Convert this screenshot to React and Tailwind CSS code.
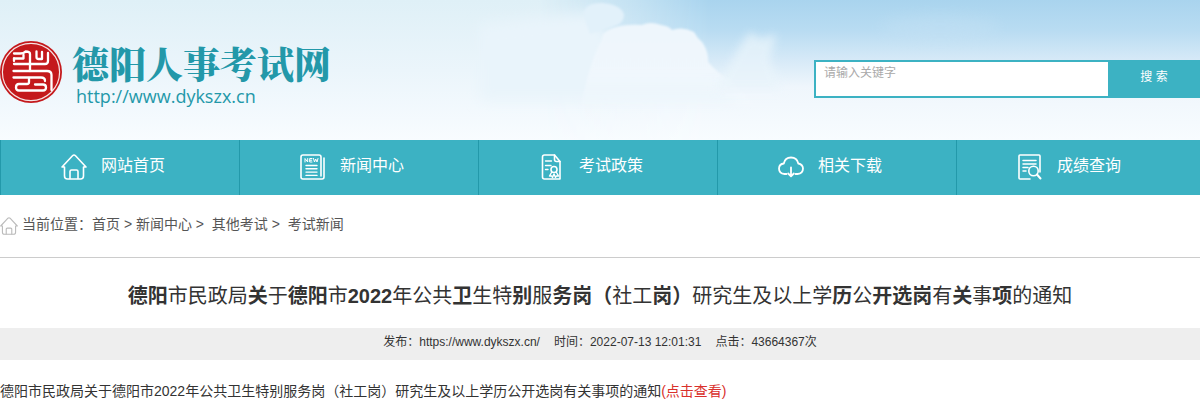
import { useState } from 'react'

function SealLogo() {
  return (
    <svg viewBox="0 0 64 64" className="h-16 w-16 shrink-0" fill="none" aria-hidden="true">
      <circle cx="31" cy="32" r="31" fill="#c4191c" />
      <circle cx="31" cy="32" r="28.6" stroke="#f6e3e3" strokeWidth="1.2" />
      <g stroke="#fff" strokeWidth="2.3" strokeLinejoin="round" strokeLinecap="round">
        <path d="M14 13.500H20Q24 13.500 25.500 11.500Q30 11.500 30 14V31" />
        <path d="M14 18.500H23.500V15M14 24H45Q48 24 48 21V13" />
        <path d="M36.500 11.500V17Q36.500 19 38.500 19H42V12" />
        <path d="M14 18.500V21M13.500 31H47Q51.500 31 51.500 35V50" />
        <path d="M13.500 37.500H41Q45 37.500 45 41" />
        <path d="M29 38V42Q29 44 27 44H19Q16 44 16 47.500Q16 50.500 19 50.500H43Q46 50.500 46 47.500Q46 44.500 43 44.500H35" />
      </g>
    </svg>
  )
}

function SkyBackground() {
  return (
    <svg
      viewBox="0 0 1200 140"
      preserveAspectRatio="none"
      className="absolute inset-0 h-full w-full"
      aria-hidden="true"
    >
      <defs>
        <linearGradient id="base" x1="0" y1="0" x2="0" y2="1">
          <stop offset="0" stopColor="#dff0f7" />
          <stop offset="0.5" stopColor="#ebf5fb" />
          <stop offset="1" stopColor="#f8fcff" />
        </linearGradient>
        <linearGradient id="sky" x1="0" y1="0" x2="0" y2="1">
          <stop offset="0" stopColor="#a9d4ee" />
          <stop offset="0.22" stopColor="#b9dcf2" />
          <stop offset="0.42" stopColor="#d5e9f7" />
          <stop offset="0.62" stopColor="#eff6fc" />
          <stop offset="1" stopColor="#f8fcff" />
        </linearGradient>
        <linearGradient id="fade" x1="0" y1="0" x2="1" y2="0">
          <stop offset="0.45" stopColor="#000" />
          <stop offset="0.53" stopColor="#888" />
          <stop offset="0.59" stopColor="#fff" />
        </linearGradient>
        <linearGradient id="cloud" x1="0" y1="0" x2="0" y2="1">
          <stop offset="0" stopColor="#eef6fc" />
          <stop offset="0.55" stopColor="#f0f7fd" />
          <stop offset="1" stopColor="#f5fafe" stopOpacity="0" />
        </linearGradient>
        <mask id="skyMask">
          <rect width="1200" height="140" fill="url(#fade)" />
        </mask>
        <filter id="soft">
          <feGaussianBlur stdDeviation="1" />
        </filter>
        <filter id="haze" x="-50%" y="-50%" width="200%" height="200%">
          <feGaussianBlur stdDeviation="7" />
        </filter>
        <filter id="wisp" x="-50%" y="-50%" width="200%" height="200%">
          <feGaussianBlur stdDeviation="4" />
        </filter>
      </defs>
      <rect width="1200" height="140" fill="url(#base)" />
      <rect width="1200" height="140" fill="url(#sky)" mask="url(#skyMask)" />
      <path d="M480 25L590 12L612 40L700 70L740 100H480Z" fill="#e9f4fb" filter="url(#haze)" />
      <path
        d="M583 14Q586 2 603 3Q622 5 624 15Q624 24 612 27L590 34Z"
        fill="#e2f1fa"
        filter="url(#soft)"
      />
      <path
        d="M602 40Q601 32 613 28Q625 24 642 25Q650 21 661 25Q669 26 672 30Q683 26 694 32Q697 38 702 42Q709 52 708 62Q716 72 730 80L760 110L580 110Q590 60 602 40Z"
        fill="url(#cloud)"
        filter="url(#soft)"
      />
      <path
        d="M740 46L750 32L760 39L776 34L770 60L782 90H715Z"
        fill="#e9f4fb"
        opacity="0.75"
        filter="url(#wisp)"
      />
      <ellipse cx="940" cy="28" rx="60" ry="12" fill="#c6e2f4" opacity="0.4" filter="url(#haze)" />
    </svg>
  )
}

function HomeIcon({ className, strokeWidth = 1.6 }) {
  return (
    <svg viewBox="0 0 26 26" className={className} fill="none" stroke="currentColor" strokeWidth={strokeWidth} strokeLinecap="round" strokeLinejoin="round" aria-hidden="true">
      <path d="M1 13L11.500 1.800Q13 0.300 14.500 1.800L25 13H22.500V22Q22.500 25 19.500 25H6.500Q3.500 25 3.500 22V13H1Z" />
      <path d="M9 24.500V17.500Q9 16 10.500 16H15.500Q17 16 17 17.500V24.500" />
    </svg>
  )
}

function NewsIcon({ className }) {
  return (
    <svg viewBox="0 0 26 26" className={className} fill="none" stroke="currentColor" strokeWidth="1.6" strokeLinecap="round" strokeLinejoin="round" aria-hidden="true">
      <path d="M21 22V3Q21 1 19 1H3Q1 1 1 3V23Q1 25 3 25H22Q24 25 24 23V4" />
      <path d="M6 11.500H17M6 14.800H17M6 18.100H17M6 21.400H17" strokeWidth="1.4" />
      <path d="M5 8V4.500L7.700 8V4.500M12 4.500H9.700V8H12M9.700 6.200H11.700M13.500 4.500L14.500 8L15.700 5L17 8L18 4.500" strokeWidth="1" />
    </svg>
  )
}

function PolicyIcon({ className }) {
  return (
    <svg viewBox="0 0 26 26" className={className} fill="none" stroke="currentColor" strokeWidth="1.6" strokeLinecap="round" strokeLinejoin="round" aria-hidden="true">
      <path d="M21 25H5.500Q3.500 25 3.500 23V3Q3.500 1 5.500 1H15.500L21 7.500V25" />
      <path d="M15.500 1V5.500Q15.500 7.500 17.500 7.500H21" />
      <path d="M6.500 7H12.500M6.500 11.500H12M6.500 15.500H9" strokeWidth="1.4" />
      <circle cx="15" cy="15.500" r="3" />
      <path d="M12.500 18.500L10.500 22H12.800L13.500 23.500L15 20L16.500 23.500L17.300 22H19.500L17.500 18.500" strokeWidth="1.400" />
    </svg>
  )
}

function DownloadIcon({ className }) {
  return (
    <svg viewBox="0 0 26 26" className={className} fill="none" stroke="currentColor" strokeWidth="1.8" strokeLinecap="round" strokeLinejoin="round" aria-hidden="true">
      <path d="M8.500 20H6.500Q1 19.500 1 14.500Q1.200 10 5.800 9.500Q7 3.500 13 3.500Q19 3.500 20.300 9.500Q24.800 10.300 25 14.500Q25 19.500 19.500 20H17.500" />
      <path d="M13 13.500V22M10.200 19.500L13 22.300L15.800 19.500" />
    </svg>
  )
}

function ScoreIcon({ className }) {
  return (
    <svg viewBox="0 0 26 26" className={className} fill="none" stroke="currentColor" strokeWidth="1.6" strokeLinecap="round" strokeLinejoin="round" aria-hidden="true">
      <path d="M13 25H3Q2 25 2 24V2Q2 1 3 1H22Q23 1 23 2V18" />
      <path d="M6 6.500H19M6 10H19M6 13.500H11M6 17H9" strokeWidth="1.500" />
      <circle cx="16.500" cy="17" r="4.700" />
      <path d="M20 20.500L23.500 24.500" strokeWidth="2" />
    </svg>
  )
}

const navItems = [
  { label: '网站首页', Icon: HomeIcon },
  { label: '新闻中心', Icon: NewsIcon },
  { label: '考试政策', Icon: PolicyIcon },
  { label: '相关下载', Icon: DownloadIcon },
  { label: '成绩查询', Icon: ScoreIcon },
]

const titleParts = [
  { text: '德阳', bold: true },
  { text: '市民政局' },
  { text: '关', bold: true },
  { text: '于' },
  { text: '德阳', bold: true },
  { text: '市' },
  { text: '2022', bold: true },
  { text: '年公共' },
  { text: '卫', bold: true },
  { text: '生特' },
  { text: '别', bold: true },
  { text: '服' },
  { text: '务岗（', bold: true },
  { text: '社工' },
  { text: '岗）', bold: true },
  { text: '研究生及以上学' },
  { text: '历', bold: true },
  { text: '公' },
  { text: '开选岗', bold: true },
  { text: '有' },
  { text: '关', bold: true },
  { text: '事' },
  { text: '项', bold: true },
  { text: '的通知' },
]

export default function App() {
  const [keyword, setKeyword] = useState('')

  return (
    <div lang="zh-CN" className="bg-white font-['Liberation_Sans','Noto_Sans_CJK_SC',sans-serif] text-[#333]">
      <header className="relative">
        <SkyBackground />
        <div className="relative flex h-[140px] items-start justify-between">
          <a href="#" className="mt-10 flex items-start">
            <SealLogo />
            <span className="ml-2 flex flex-col text-[#2398a9]">
              <span className="font-['Noto_Serif_CJK_SC','Noto_Sans_CJK_SC',serif] text-[37px] leading-[46px] font-black">
                德阳人事考试网
              </span>
              <span className="ml-1 font-['Open_Sans',sans-serif] text-lg leading-5">http://www.dykszx.cn</span>
            </span>
          </a>
          <form className="mt-[60px] flex h-[38px]" onSubmit={(e) => e.preventDefault()}>
            <input
              type="text"
              aria-label="请输入关键字"
              placeholder="请输入关键字"
              className="w-[294px] border-2 border-r-0 border-[#3cb2c3] bg-white px-2 pb-3 text-xs outline-none placeholder:text-[#a9a9a9]"
              value={keyword}
              onChange={(e) => setKeyword(e.target.value)}
            />
            <button type="submit" className="w-[92px] bg-[#3cb2c3] pb-1 text-xs text-white">
              搜 索
            </button>
          </form>
        </div>
      </header>

      <nav className="bg-[#3cb2c3]">
        <ul className="grid grid-cols-5 pr-[5px]">
          {navItems.map(({ label, Icon }) => (
            <li key={label} className="border-l border-[#2399aa]">
              <a href="#" className="flex h-[55px] items-start pl-[60px] text-base text-white">
                <Icon className="mt-[14px] h-[26px] w-[26px]" />
                <span className="ml-[14px] leading-[52px]">{label}</span>
              </a>
            </li>
          ))}
        </ul>
      </nav>

      <div className="flex h-[63px] items-start border-b border-[#ccc] text-sm leading-[58px] text-[#555]">
        <HomeIcon className="mt-[22px] mr-1 h-[18px] w-[18px] text-[#bbb]" />
        <p className="whitespace-pre">
          当前位置：<a href="#">首页</a> &gt; <a href="#">新闻中心</a> &gt;{'  '}
          <a href="#">其他考试</a> &gt;{'  '}
          <a href="#">考试新闻</a>
        </p>
      </div>

      <main>
        <h1 className="pt-[18px] pb-[12px] text-center text-xl leading-10">
          {titleParts.map((part, i) => (
            <span key={i} className={part.bold ? 'font-bold' : 'font-normal'}>
              {part.text}
            </span>
          ))}
        </h1>
        <p className="flex justify-center gap-[14px] bg-[#eee] pb-1 text-xs leading-7">
          <span>发布：https://www.dykszx.cn/</span>
          <span>时间：2022-07-13 12:01:31</span>
          <span>点击：43664367次</span>
        </p>
        <p className="pt-4 text-sm leading-[30px] whitespace-nowrap">
          德阳市民政局关于德阳市2022年公共卫生特别服务岗（社工岗）研究生及以上学历公开选岗有关事项的通知
          <a href="#" className="text-[#d9302c]">(点击查看)</a>
        </p>
      </main>
    </div>
  )
}
